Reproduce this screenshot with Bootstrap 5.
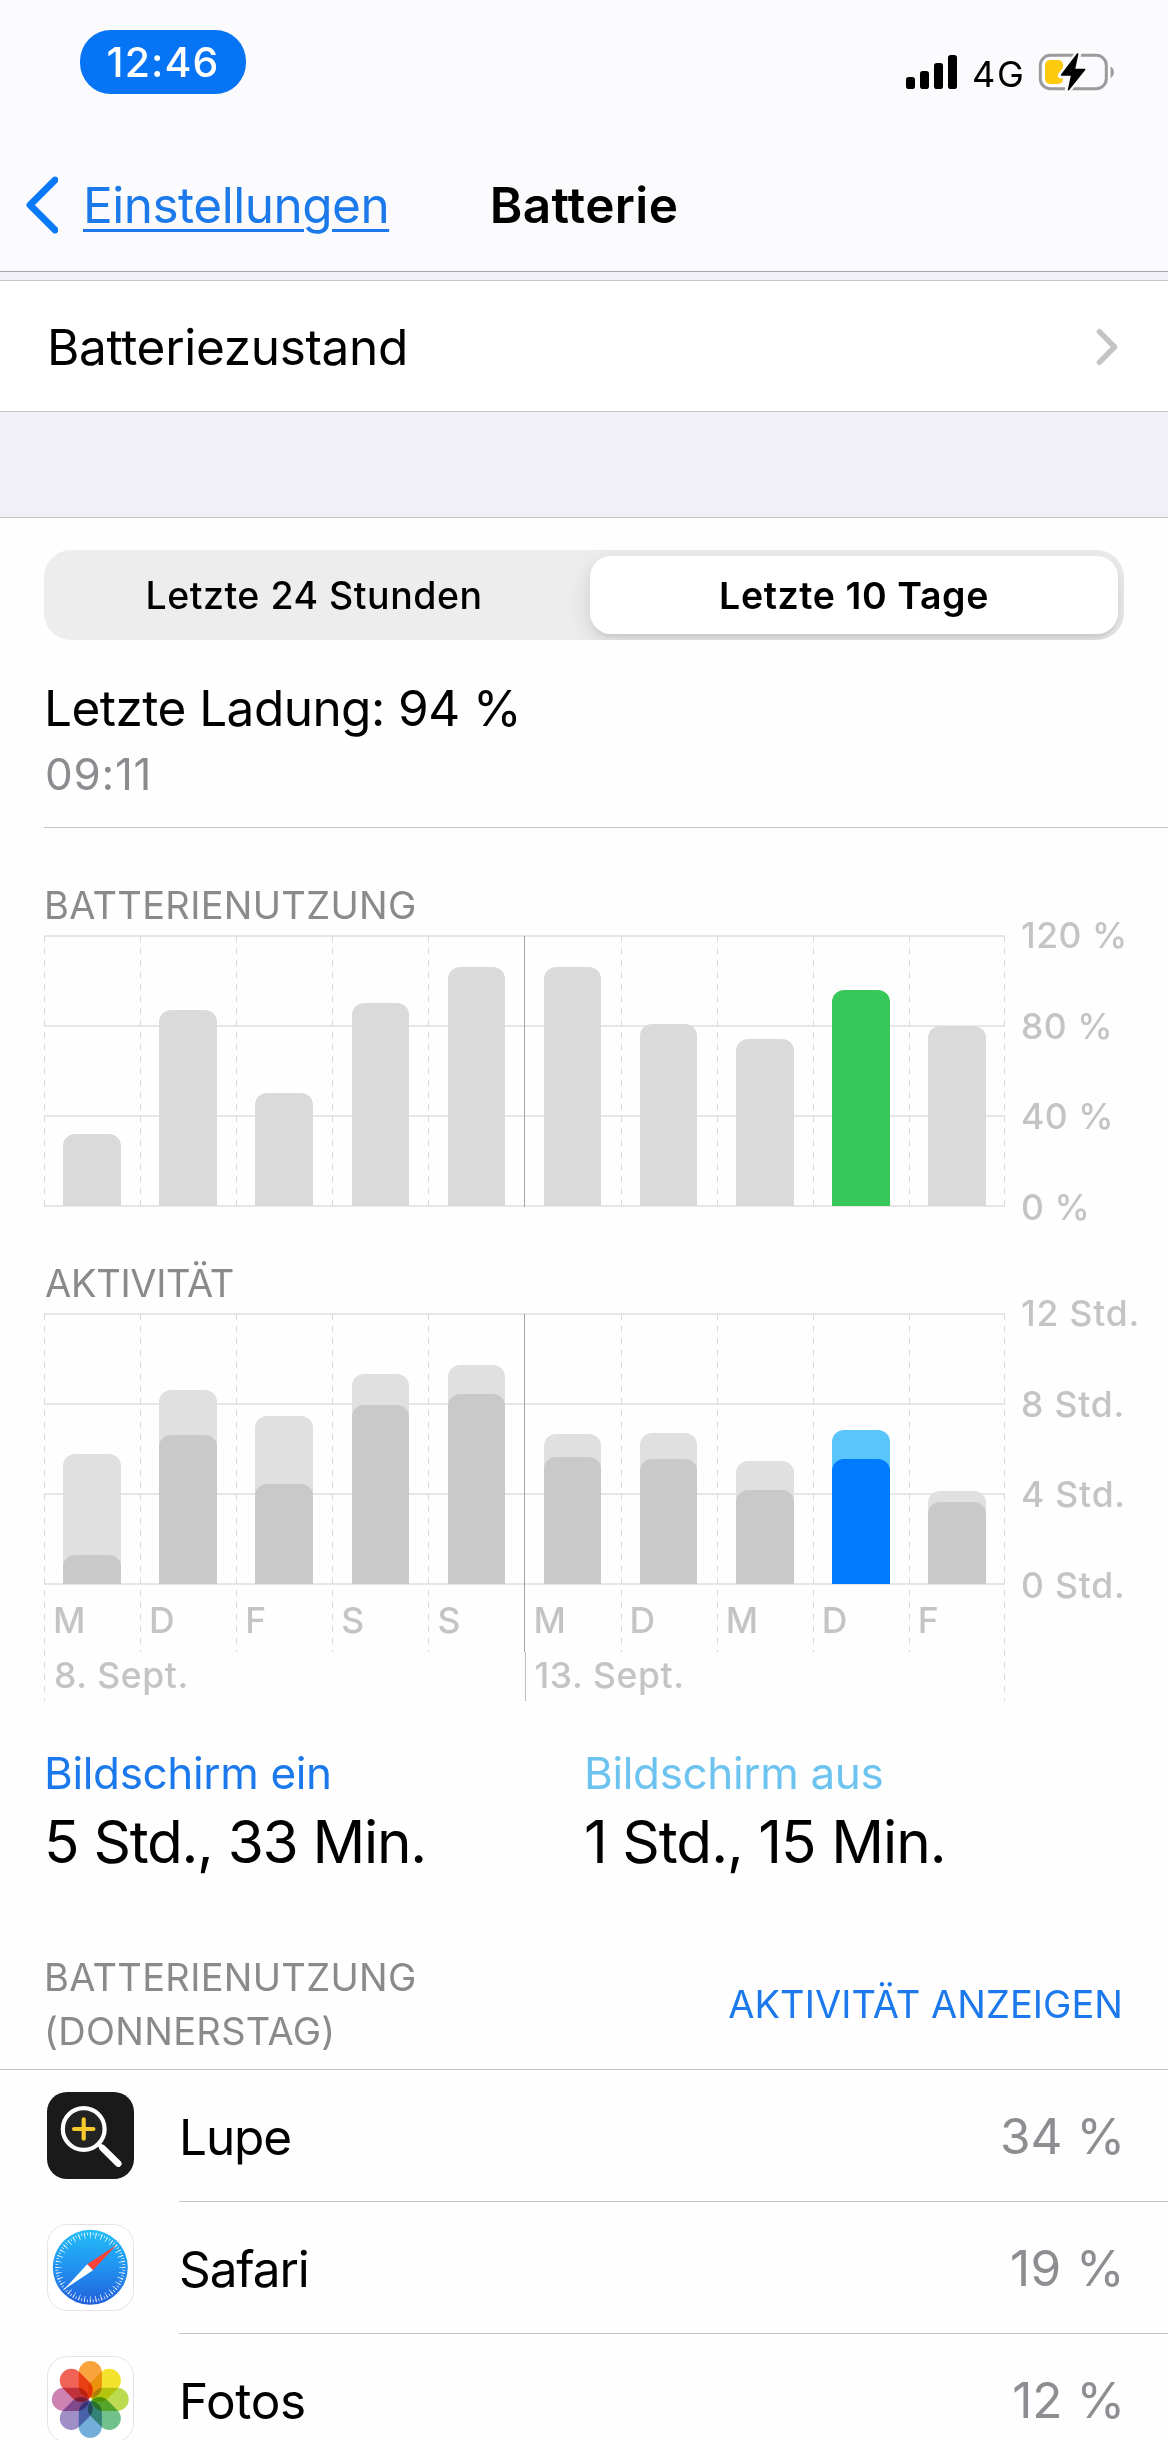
<!DOCTYPE html>
<html lang="de">
<head>
<meta charset="utf-8">
<meta name="viewport" content="width=device-width, initial-scale=1">
<title>Batterie</title>
<link href="https://cdn.jsdelivr.net/npm/bootstrap@5.3.0/dist/css/bootstrap.min.css" rel="stylesheet">
<style>
  body { width: 1168px; height: 2440px; overflow: hidden; background: #fefefe; color: #000; font-family: Inter, "Liberation Sans", sans-serif; line-height: 1; }
  svg { display: block; flex: none; }

  /* Header */
  .top-area { height: 272px; padding-top: 30px; background: #fbfbfd; border-bottom: 1px solid #a7a7aa; }
  .status-row { padding: 0 52px 0 80px; }
  .time-pill { width: 166px; height: 64px; border-radius: 31px; background: #0674f4; color: #fff; font-size: 41px; font-weight: 500; letter-spacing: 1.1px; }
  .status-icons { margin-top: 23px; }
  .net-type { font-size: 36px; line-height: 42px; letter-spacing: 1.7px; width: 53px; margin: 0 12px 0 14px; }
  .nav-row { margin-top: 44px; height: 132px; font-size: 49.5px; padding: 0 25px; }
  .back-link { color: #1b79ea; letter-spacing: -.5px; text-decoration: underline; text-decoration-thickness: 3px; text-underline-offset: 5.5px; margin-left: 25px; line-height: 66px; }
  .nav-title { font-size: 49.5px; font-weight: 600; letter-spacing: .38px; line-height: 66px; }

  /* Settings rows */
  .gap-strip { background: #f1f0f6; }
  .gap-a { height: 8px; }
  .gap-b { height: 105px; }
  .rule-y { border-top: 1px solid #c5c5c8; border-bottom: 1px solid #c5c5c8; }
  .health-row { height: 132px; padding: 1px 50px 0 47px; font-size: 49.5px; letter-spacing: -.32px; background: #fff; }
  .health-row span { padding-top: 3px; }

  .usage-area { border-top: 1px solid #c5c5c8; padding-left: 44px; }
  .seg { margin-top: 32px; width: 1080px; height: 90px; border-radius: 27px; background: #ededed; font-size: 37.5px; font-weight: 500; overflow: hidden; }
  .seg-item { width: 540px; padding-top: 1px; letter-spacing: .51px; }
  .seg-on { width: 528px; margin: 6px; padding-top: 1px; border-radius: 21px; background: #fff; font-weight: 600; letter-spacing: .59px; box-shadow: 0 8px 24px rgba(0,0,0,.13), 0 3px 3px rgba(0,0,0,.05); }
  .charge { margin-top: 38px; font-size: 49.5px; line-height: 60px; letter-spacing: -.53px; }
  .charge-time { margin-top: 11px; font-size: 44px; line-height: 50px; letter-spacing: .72px; color: #8c8c90; padding-left: 1px; }
  .thin-rule { margin-top: 28px; height: 1px; background: #c5c5c8; }
  .caption { font-size: 38px; line-height: 40px; letter-spacing: .32px; color: #8a8a8d; }
  .cap-1 { margin-top: 57px; }
  .cap-2 { margin-top: 56px; letter-spacing: -.3px; padding-left: 1px; }

  /* Charts */
  .chart { margin-top: 10px; }
  .plot { width: 961px; background: repeating-linear-gradient(#e7e7e7 0 2px, transparent 2px 90px) 0 0 / 100% 272px no-repeat; }
  .day { flex: 1 1 0; background: repeating-linear-gradient(#dadada 0 6px, transparent 6px 12px) 0 1px / 1px 100% no-repeat; }
  .day.edge, .week-name.edge { flex: 0 0 1px; margin-left: -1px; padding: 0; }
  .day.week { background: linear-gradient(#a3a3a5, #a3a3a5) 0 1px / 1px 100% no-repeat; }
  .bars { height: 271px; }
  .bar-use, .bar-off, .bar-on { width: 57.6px; border-radius: 12px 12px 0 0; }
  .bar-use { background: #dadada; }
  .bar-off { background: #e0e0e0; }
  .bar-on { background: #c9c9c9; }
  .bar-use.sel { background: #37c75b; }
  .bar-off.sel { background: #5ac5fa; }
  .bar-off.sel .bar-on { background: #007aff; }
  .scale, .day-name, .week-name { font-size: 35.5px; font-weight: 500; color: #c4c4c6; letter-spacing: .9px; }
  .scale { height: 298px; margin: -12px 0 -14px 16px; line-height: 26px; letter-spacing: .8px; }
  .scale-pct { letter-spacing: .5px; }
  .day-name { height: 68px; line-height: 73px; padding-left: 9px; }
  .week-row { width: 961px; }
  .week-name { flex: 1 1 0; height: 49px; line-height: 47px; padding-left: 10px; letter-spacing: .6px; background: repeating-linear-gradient(#dadada 0 6px, transparent 6px 12px) 0 -2px / 1px 200% no-repeat; }
  .week-name.solid { background: linear-gradient(#bdbdbf, #bdbdbf) 0 0 / 1px 100% no-repeat; }

  /* Totals */
  .totals { margin-top: 47px; }
  .total-cell { width: 540px; }
  .total-label { font-size: 44px; line-height: 50px; letter-spacing: -.35px; }
  .total-value { margin-top: 14px; font-size: 58.5px; line-height: 60px; letter-spacing: -1.3px; }
  .total-value.loose { letter-spacing: -1px; }
  .tone-on { color: #1b79ec; }
  .tone-off { color: #6dc3f0; }
  .list-head { margin-top: 78px; padding-right: 45px; height: 108px; }
  .list-head .caption { line-height: 54px; }
  .show-link { font-size: 38px; color: #1b79ec; letter-spacing: .04px; text-decoration: none; }

  /* App list */
  .app-list { margin-top: 11px; border-top: 1px solid #c5c5c8; }
  .app-row { height: 132px; padding-left: 47px; font-size: 49.5px; }
  .app-icon { margin-bottom: 1px; }
  .app-body { margin-left: 45px; padding-right: 43px; border-bottom: 1px solid #c5c5c8; }
  .app-name { letter-spacing: -1.1px; padding-top: 4px; }
  .app-name.loose { letter-spacing: -.33px; }
  .app-pct { color: #8e8e92; letter-spacing: 0; padding-top: 2px; }
  .app-pct.loose { letter-spacing: .4px; }
  .petal { mix-blend-mode: multiply; }
  .petals { isolation: isolate; }
</style>
</head>
<body>
<header class="top-area">
  <div class="status-row d-flex justify-content-between align-items-start">
    <div class="time-pill d-flex align-items-center justify-content-center">12:46</div>
    <div class="status-icons d-flex align-items-start">
      <svg width="52" height="38" viewBox="0 0 52 38">
        <rect x="0" y="24" width="9" height="12" rx="2.8"/>
        <rect x="14" y="18" width="9" height="18" rx="2.8"/>
        <rect x="28" y="10" width="9" height="26" rx="2.8"/>
        <rect x="42" y="2" width="9" height="34" rx="2.8"/>
      </svg>
      <span class="net-type">4G</span>
      <svg width="79" height="38" viewBox="1037 53 79 38">
        <rect x="1040.3" y="55.3" width="66" height="33.4" rx="10" fill="none" stroke="#9b9b9d" stroke-width="3"/>
        <rect x="1045" y="60" width="18" height="24" rx="5" fill="#fecb0c"/>
        <path d="M1110.6 66.4c4.4 2.4 4.4 9.2 0 11.6z" fill="#9b9b9d"/>
        <path d="M1078.4 53.2L1074.6 69.2H1085.6L1067.6 90.6L1071.4 75.4H1060.8Z" fill="#000" stroke="#fbfbfd" stroke-width="6" stroke-linejoin="round"/>
        <path d="M1077.6 54L1074.3 69.6H1084.6L1068.6 89.6L1071.8 75H1061.6Z" fill="#000" stroke="#000" stroke-width="1.6" stroke-linejoin="round"/>
      </svg>
    </div>
  </div>
  <div class="nav-row d-flex align-items-center">
    <div class="d-flex align-items-center col">
      <svg width="33" height="58" viewBox="0 0 33 58"><path d="M30 4L5 29L30 54" fill="none" stroke="#0a7af8" stroke-width="6.8" stroke-linecap="round" stroke-linejoin="round"/></svg>
      <a class="back-link" href="#">Einstellungen</a>
    </div>
    <h1 class="nav-title mb-0">Batterie</h1>
    <div class="col"></div>
  </div>
</header>

<main>
  <div class="gap-strip gap-a"></div>
  <div class="health-row rule-y d-flex align-items-center justify-content-between">
    <span>Batteriezustand</span>
    <svg width="22" height="38" viewBox="0 0 22 38"><path d="M3.4 3.6L18.6 19L3.4 34.4" fill="none" stroke="#c4c4c6" stroke-width="5.4" stroke-linecap="round" stroke-linejoin="round"/></svg>
  </div>
  <div class="gap-strip gap-b"></div>

  <section class="usage-area">
    <div class="seg d-flex">
      <div class="seg-item d-flex align-items-center justify-content-center">Letzte 24 Stunden</div>
      <div class="seg-on d-flex align-items-center justify-content-center">Letzte 10 Tage</div>
    </div>
    <div class="charge">Letzte Ladung: 94 %</div>
    <div class="charge-time">09:11</div>
    <div class="thin-rule"></div>

    <div class="caption cap-1">BATTERIENUTZUNG</div>
    <div class="chart d-flex align-items-start">
      <div class="plot d-flex">
        <div class="day pb-0"><div class="bars d-flex align-items-end justify-content-center"><div class="bar-use" style="height:72px"></div></div></div>
        <div class="day"><div class="bars d-flex align-items-end justify-content-center"><div class="bar-use" style="height:196px"></div></div></div>
        <div class="day"><div class="bars d-flex align-items-end justify-content-center"><div class="bar-use" style="height:113px"></div></div></div>
        <div class="day"><div class="bars d-flex align-items-end justify-content-center"><div class="bar-use" style="height:203px"></div></div></div>
        <div class="day"><div class="bars d-flex align-items-end justify-content-center"><div class="bar-use" style="height:239px"></div></div></div>
        <div class="day week"><div class="bars d-flex align-items-end justify-content-center"><div class="bar-use" style="height:239px"></div></div></div>
        <div class="day"><div class="bars d-flex align-items-end justify-content-center"><div class="bar-use" style="height:182px"></div></div></div>
        <div class="day"><div class="bars d-flex align-items-end justify-content-center"><div class="bar-use" style="height:167px"></div></div></div>
        <div class="day"><div class="bars d-flex align-items-end justify-content-center"><div class="bar-use sel" style="height:216px"></div></div></div>
        <div class="day"><div class="bars d-flex align-items-end justify-content-center"><div class="bar-use" style="height:180px"></div></div><div style="height:1px"></div></div>
        <div class="day edge"></div>
      </div>
      <div class="scale scale-pct d-flex flex-column justify-content-between"><span>120 %</span><span>80 %</span><span>40 %</span><span>0 %</span></div>
    </div>

    <div class="caption cap-2">AKTIVITÄT</div>
    <div class="chart d-flex align-items-start">
      <div class="plot d-flex">
        <div class="day"><div class="bars d-flex align-items-end justify-content-center"><div class="bar-off d-flex align-items-end" style="height:130px"><div class="bar-on" style="height:29px"></div></div></div><div class="day-name">M</div></div>
        <div class="day"><div class="bars d-flex align-items-end justify-content-center"><div class="bar-off d-flex align-items-end" style="height:194px"><div class="bar-on" style="height:149px"></div></div></div><div class="day-name">D</div></div>
        <div class="day"><div class="bars d-flex align-items-end justify-content-center"><div class="bar-off d-flex align-items-end" style="height:168px"><div class="bar-on" style="height:100px"></div></div></div><div class="day-name">F</div></div>
        <div class="day"><div class="bars d-flex align-items-end justify-content-center"><div class="bar-off d-flex align-items-end" style="height:210px"><div class="bar-on" style="height:179px"></div></div></div><div class="day-name">S</div></div>
        <div class="day"><div class="bars d-flex align-items-end justify-content-center"><div class="bar-off d-flex align-items-end" style="height:219px"><div class="bar-on" style="height:190px"></div></div></div><div class="day-name">S</div></div>
        <div class="day week"><div class="bars d-flex align-items-end justify-content-center"><div class="bar-off d-flex align-items-end" style="height:150px"><div class="bar-on" style="height:127px"></div></div></div><div class="day-name">M</div></div>
        <div class="day"><div class="bars d-flex align-items-end justify-content-center"><div class="bar-off d-flex align-items-end" style="height:151px"><div class="bar-on" style="height:125px"></div></div></div><div class="day-name">D</div></div>
        <div class="day"><div class="bars d-flex align-items-end justify-content-center"><div class="bar-off d-flex align-items-end" style="height:123px"><div class="bar-on" style="height:94px"></div></div></div><div class="day-name">M</div></div>
        <div class="day"><div class="bars d-flex align-items-end justify-content-center"><div class="bar-off sel d-flex align-items-end" style="height:154px"><div class="bar-on" style="height:125px"></div></div></div><div class="day-name">D</div></div>
        <div class="day"><div class="bars d-flex align-items-end justify-content-center"><div class="bar-off d-flex align-items-end" style="height:93px"><div class="bar-on" style="height:82px"></div></div></div><div class="day-name">F</div></div>
        <div class="day edge"></div>
      </div>
      <div class="scale d-flex flex-column justify-content-between"><span>12 Std.</span><span>8 Std.</span><span>4 Std.</span><span>0 Std.</span></div>
    </div>
    <div class="week-row d-flex">
      <div class="week-name">8. Sept.</div>
      <div class="week-name solid">13. Sept.</div>
      <div class="week-name edge"></div>
    </div>

    <div class="totals d-flex">
      <div class="total-cell"><div class="total-label tone-on">Bildschirm ein</div><div class="total-value">5 Std., 33 Min.</div></div>
      <div class="total-cell"><div class="total-label tone-off">Bildschirm aus</div><div class="total-value loose">1 Std., 15 Min.</div></div>
    </div>

    <div class="list-head d-flex align-items-center justify-content-between">
      <div class="caption">BATTERIENUTZUNG<br>(DONNERSTAG)</div>
      <a class="show-link" href="#">AKTIVITÄT ANZEIGEN</a>
    </div>
  </section>

  <section class="app-list">
    <div class="app-row d-flex">
      <svg class="app-icon align-self-center" width="87" height="87" viewBox="0 0 87 87">
        <rect width="87" height="87" rx="20" fill="#1a1a1a"/>
        <circle cx="36.7" cy="37" r="20.9" fill="#232323" stroke="#fff" stroke-width="4.2"/>
        <path d="M51.5 52L57 57.5" stroke="#fff" stroke-width="4.5"/>
        <path d="M55.5 56L71.3 71.6" stroke="#fff" stroke-width="6.6" stroke-linecap="round"/>
        <path d="M27 37H46.4M36.7 27.3V46.7" stroke="#f7c92c" stroke-width="4.2" stroke-linecap="round"/>
      </svg>
      <div class="app-body col d-flex align-items-center justify-content-between"><span class="app-name">Lupe</span><span class="app-pct">34 %</span></div>
    </div>
    <div class="app-row d-flex">
      <svg class="app-icon align-self-center" width="87" height="87" viewBox="0 0 87 87">
        <defs><linearGradient id="sky" x1="0" y1="0" x2="0" y2="1"><stop offset="0" stop-color="#22bdf6"/><stop offset=".45" stop-color="#2197f2"/><stop offset="1" stop-color="#225fdb"/></linearGradient></defs>
        <rect x=".5" y=".5" width="86" height="86" rx="20" fill="#fff" stroke="#e4e4e6"/>
        <circle cx="43.3" cy="43.3" r="37.5" fill="url(#sky)"/>
        <circle cx="43.3" cy="43.3" r="33.6" fill="none" stroke="#fff" stroke-opacity=".85" stroke-width="2.8" pathLength="144" stroke-dasharray=".55 1.45" stroke-dashoffset=".27"/>
        <circle cx="43.3" cy="43.3" r="32" fill="none" stroke="#fff" stroke-opacity=".85" stroke-width="6" pathLength="144" stroke-dasharray=".55 3.45" stroke-dashoffset=".27"/>
        <path d="M69.5 21L46 46.3L40.2 40.3Z" fill="#f8423a"/>
        <path d="M17 65.5L40.2 40.3L46 46.3Z" fill="#fff"/>
      </svg>
      <div class="app-body col d-flex align-items-center justify-content-between"><span class="app-name">Safari</span><span class="app-pct loose">19 %</span></div>
    </div>
    <div class="app-row d-flex">
      <svg class="app-icon align-self-center" width="87" height="87" viewBox="0 0 87 87">
        <rect x=".5" y=".5" width="86" height="86" rx="20" fill="#fff" stroke="#e4e4e6"/>
        <g class="petals" transform="translate(43.3 43.4)">
          <rect class="petal" x="-11.6" y="-38.4" width="23.2" height="37" rx="11.6" fill="#f8a33c"/>
          <rect class="petal" x="-11.6" y="-38.4" width="23.2" height="37" rx="11.6" fill="#f3e32c" transform="rotate(45)"/>
          <rect class="petal" x="-11.6" y="-38.4" width="23.2" height="37" rx="11.6" fill="#bddb50" transform="rotate(90)"/>
          <rect class="petal" x="-11.6" y="-38.4" width="23.2" height="37" rx="11.6" fill="#72c08c" transform="rotate(135)"/>
          <rect class="petal" x="-11.6" y="-38.4" width="23.2" height="37" rx="11.6" fill="#75add9" transform="rotate(180)"/>
          <rect class="petal" x="-11.6" y="-38.4" width="23.2" height="37" rx="11.6" fill="#9f8fc6" transform="rotate(225)"/>
          <rect class="petal" x="-11.6" y="-38.4" width="23.2" height="37" rx="11.6" fill="#cc82b3" transform="rotate(270)"/>
          <rect class="petal" x="-11.6" y="-38.4" width="23.2" height="37" rx="11.6" fill="#f16257" transform="rotate(315)"/>
        </g>
      </svg>
      <div class="app-body col d-flex align-items-center justify-content-between"><span class="app-name loose">Fotos</span><span class="app-pct">12 %</span></div>
    </div>
  </section>
</main>
<script src="https://cdn.jsdelivr.net/npm/bootstrap@5.3.0/dist/js/bootstrap.bundle.min.js"></script>
</body>
</html>
